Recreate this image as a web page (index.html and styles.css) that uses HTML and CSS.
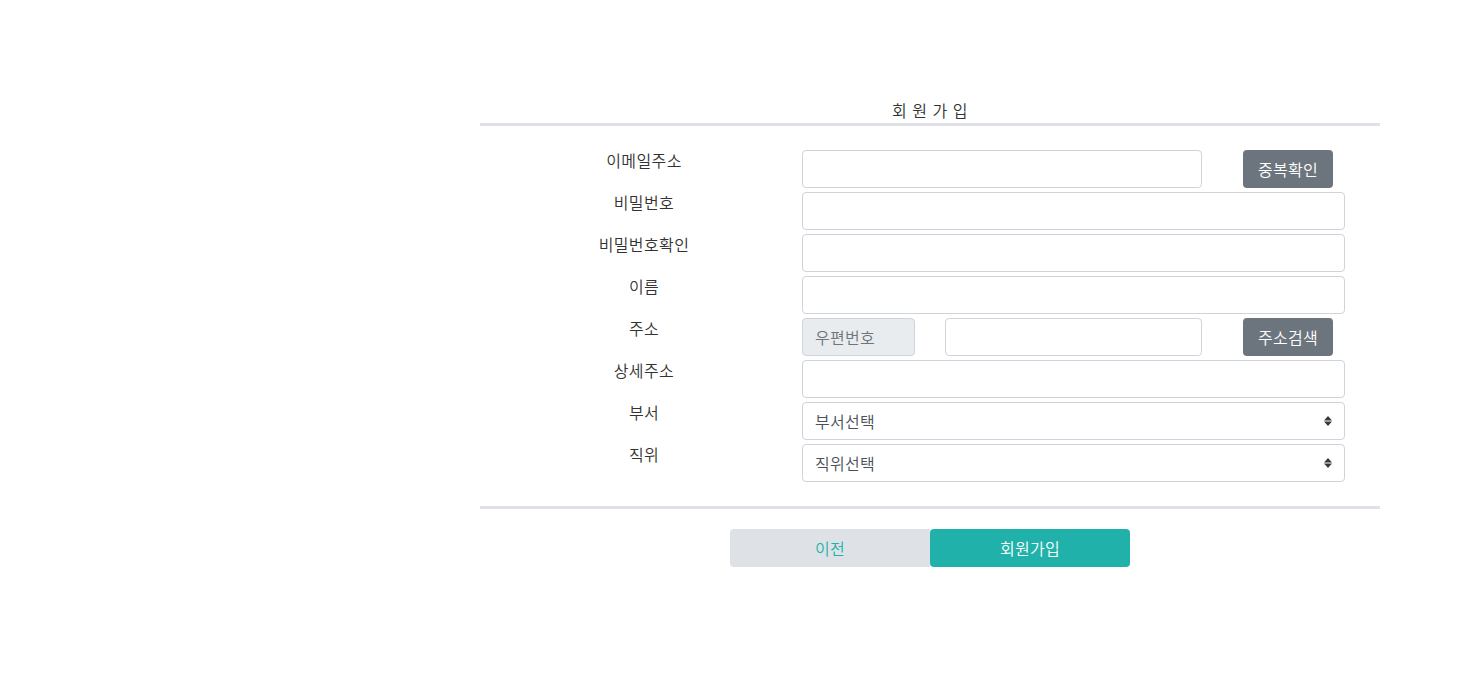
FILE: index.html
```html
<!DOCTYPE html>
<html lang="ko">
<head>
<meta charset="utf-8">
<title>회원가입</title>
<link rel="stylesheet" href="styles.css">
</head>
<body>
<div class="wrap">
  <div class="title">회 원 가 입</div>
  <hr class="line">
  <form class="form">
    <div class="row">
      <label class="lbl">이메일주소</label>
      <div class="field split">
        <input class="ctl w400" type="text">
        <button type="button" class="btn-sec">중복확인</button>
      </div>
    </div>
    <div class="row">
      <label class="lbl">비밀번호</label>
      <div class="field"><input class="ctl full" type="password"></div>
    </div>
    <div class="row">
      <label class="lbl">비밀번호확인</label>
      <div class="field"><input class="ctl full" type="password"></div>
    </div>
    <div class="row">
      <label class="lbl">이름</label>
      <div class="field"><input class="ctl full" type="text"></div>
    </div>
    <div class="row">
      <label class="lbl">주소</label>
      <div class="field split">
        <input class="ctl zip" type="text" placeholder="우편번호" readonly>
        <input class="ctl addr" type="text">
        <button type="button" class="btn-sec">주소검색</button>
      </div>
    </div>
    <div class="row">
      <label class="lbl">상세주소</label>
      <div class="field"><input class="ctl full" type="text"></div>
    </div>
    <div class="row">
      <label class="lbl">부서</label>
      <div class="field">
        <div class="sel"><span>부서선택</span>
          <svg class="arr" width="8" height="12" viewBox="0 0 8 12"><path d="M4 1 L8 5.5 H0 Z M4 11 L8 6.5 H0 Z" fill="#343a40"/></svg>
        </div>
      </div>
    </div>
    <div class="row">
      <label class="lbl">직위</label>
      <div class="field">
        <div class="sel"><span>직위선택</span>
          <svg class="arr" width="8" height="12" viewBox="0 0 8 12"><path d="M4 1 L8 5.5 H0 Z M4 11 L8 6.5 H0 Z" fill="#343a40"/></svg>
        </div>
      </div>
    </div>
  </form>
  <hr class="line line2">
  <div class="actions">
    <button type="button" class="btn-prev">이전</button>
    <button type="button" class="btn-join">회원가입</button>
  </div>
</div>
</body>
</html>
```

FILE: styles.css
```css
* { box-sizing: border-box; }
body {
  margin: 0;
  background: #fff;
  font-family: "Noto Sans CJK KR", "Noto Sans", sans-serif;
  font-weight: 350;
  color: #212529;
  font-size: 16px;
}
.wrap {
  width: 900px;
  margin-left: 480px;
  padding-top: 98px;
}
.title {
  text-align: center;
  font-size: 16px;
  line-height: 24px;
  color: #333;
  letter-spacing: 0.5px;
}
.line {
  margin: 1px 0 0 0;
  border: 0;
  height: 3px;
  background: #dee2e6;
}
.form {
  margin-top: 24px;
  display: flex;
  flex-direction: column;
  gap: 4px;
}
.row {
  display: flex;
  height: 38px;
}
.lbl {
  width: 322px;
  padding-left: 6px;
  text-align: center;
  line-height: 20px;
  letter-spacing: 0.4px;
  color: #333;
  font-size: 16px;
}
.field {
  width: 543px;
  display: flex;
}
.ctl {
  height: 38px;
  border: 1px solid #ced4da;
  border-radius: 4px;
  padding: 6px 12px;
  font: inherit;
  font-size: 16px;
  color: #495057;
  background: #fff;
  outline: none;
}
.full { width: 543px; }
.w400 { width: 400px; }
.zip {
  width: 113px;
  background: #e9ecef;
}
.zip::placeholder { color: #6c757d; letter-spacing: 0.3px; }
.addr {
  width: 257px;
  margin-left: 30px;
}
.btn-sec {
  margin-left: 41px;
  width: 90px;
  height: 38px;
  border: 0;
  border-radius: 4px;
  background: #6c757d;
  color: #fff;
  font: inherit;
  font-size: 16px;
  letter-spacing: 0.3px;
  padding: 0;
}
.sel {
  width: 543px;
  height: 38px;
  border: 1px solid #ced4da;
  border-radius: 4px;
  display: flex;
  align-items: center;
  justify-content: space-between;
  padding: 0 12px;
  color: #495057;
  font-size: 16px;
  letter-spacing: 0.3px;
}
.line2 { margin-top: 24px; }
.actions {
  margin-top: 20px;
  display: flex;
  justify-content: center;
}
.actions button {
  width: 200px;
  height: 38px;
  border: 0;
  font: inherit;
  font-size: 16px;
  letter-spacing: 0.3px;
  padding: 0;
}
.btn-prev {
  background: #dee2e6;
  color: #20b2aa;
  border-radius: 4px 0 0 4px;
}
.btn-join {
  background: #20b2aa;
  color: #fff;
  border-radius: 4px;
}
```
